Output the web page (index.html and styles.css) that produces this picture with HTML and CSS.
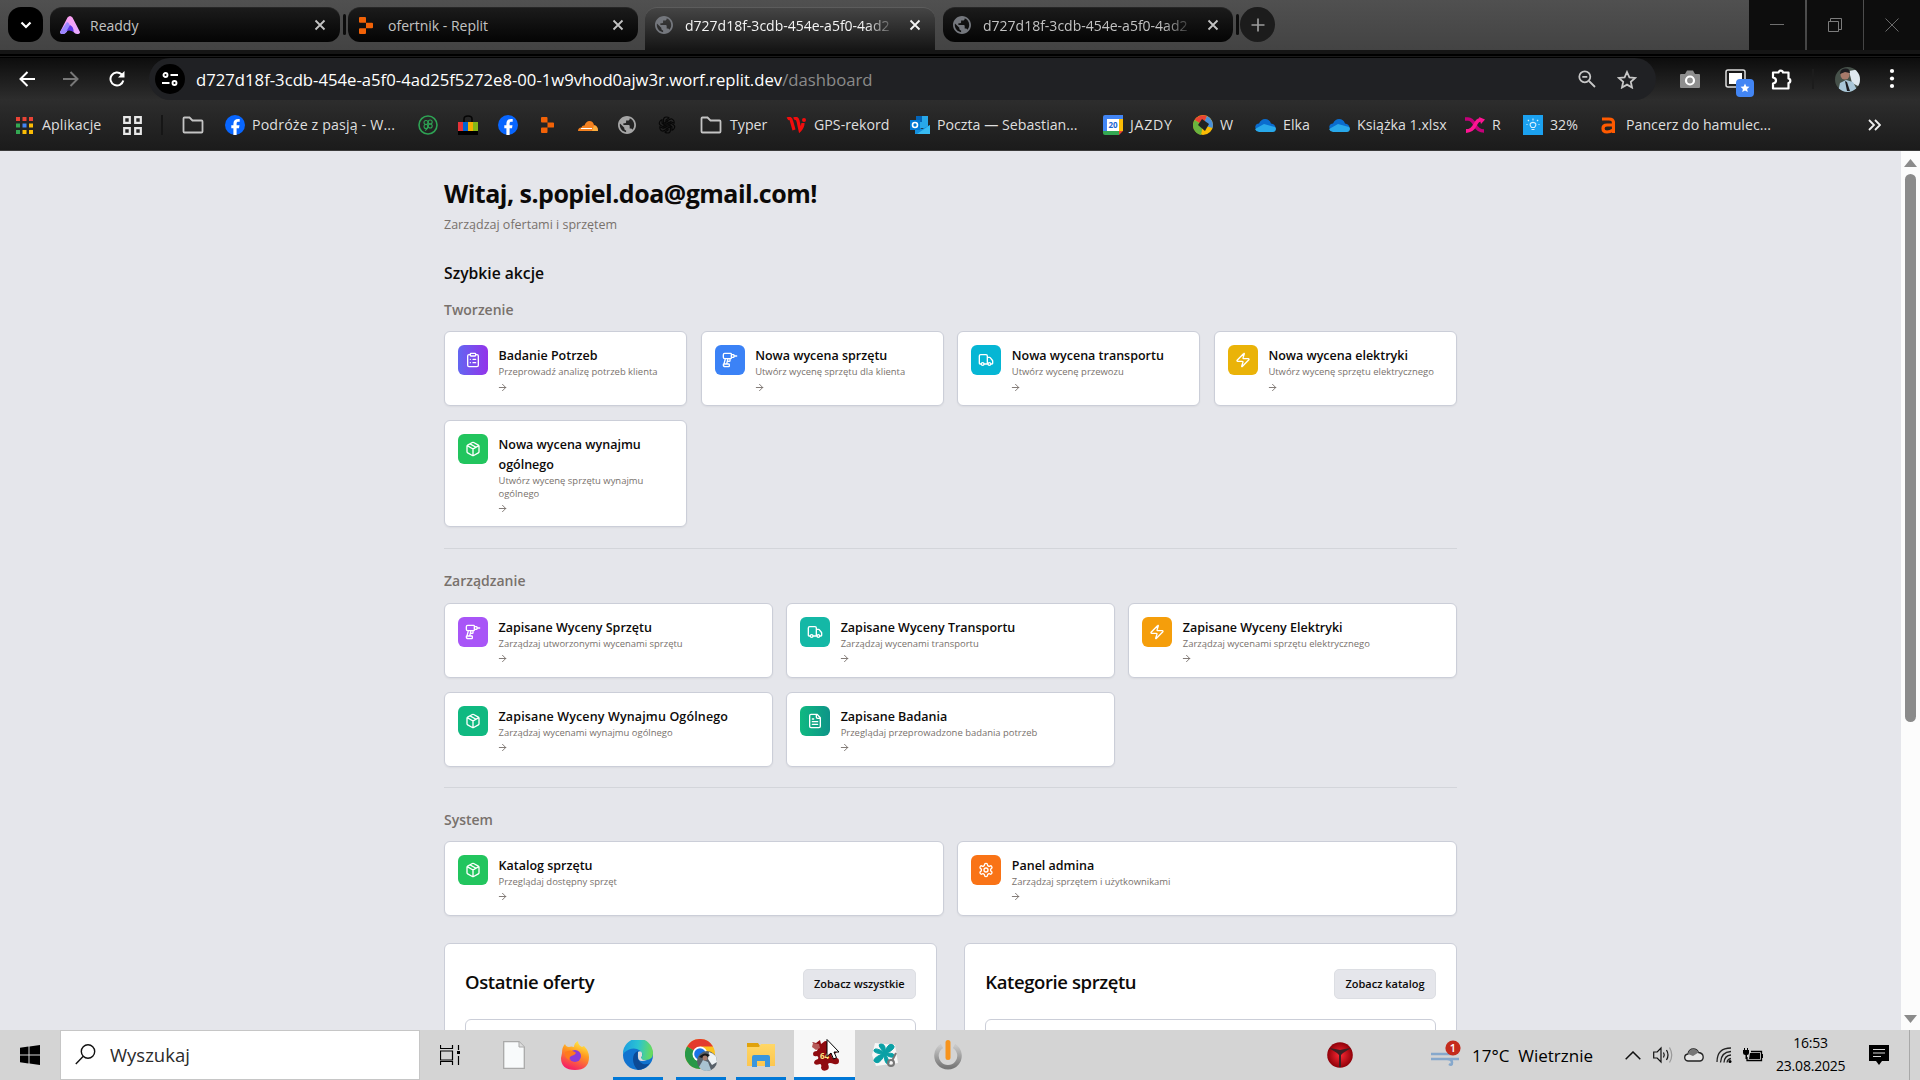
FILE: index.html
```html
<!DOCTYPE html>
<html lang="pl">
<head>
<meta charset="utf-8">
<title>Dashboard</title>
<link rel="stylesheet" href="styles.css">
</head>
<body>
<svg class="defs" aria-hidden="true">
  <defs>
    <linearGradient id="gA" x1="0" y1="0" x2="0.3" y2="1"><stop offset="0" stop-color="#ff9ff0"/><stop offset="1" stop-color="#e9a8ff"/></linearGradient>
    <linearGradient id="gEdge" x1="0" y1="0.3" x2="1" y2="0.4"><stop offset="0" stop-color="#1b9de2"/><stop offset=".5" stop-color="#2bc3d2"/><stop offset="1" stop-color="#6bdc58"/></linearGradient>
    <linearGradient id="gFox" x1="0.7" y1="0" x2="0.3" y2="1"><stop offset="0" stop-color="#fff14a"/><stop offset=".4" stop-color="#ff9a1f"/><stop offset="1" stop-color="#f5166a"/></linearGradient>
    <linearGradient id="gGrey" x1="0" y1="0" x2="0" y2="1"><stop offset="0" stop-color="#c8c8c8"/><stop offset="1" stop-color="#777"/></linearGradient>
    <linearGradient id="gFolder" x1="0" y1="0" x2="0" y2="1"><stop offset="0" stop-color="#ffd766"/><stop offset="1" stop-color="#fcc64f"/></linearGradient>
    <radialGradient id="gRed"><stop offset="0" stop-color="#ff2a35"/><stop offset="1" stop-color="#8f0009"/></radialGradient>
  </defs>
  <symbol id="clipboard" viewBox="0 0 24 24"><rect width="8" height="4" x="8" y="2" rx="1"/><path d="M16 4h2a2 2 0 0 1 2 2v14a2 2 0 0 1-2 2H6a2 2 0 0 1-2-2V6a2 2 0 0 1 2-2h2M12 11h4M12 16h4M8 11h.01M8 16h.01"/></symbol>
  <symbol id="drill" viewBox="0 0 24 24"><path d="M14 9c0 .6-.4 1-1 1H4c-1.1 0-2-.9-2-2V4c0-1.1.9-2 2-2h9c.6 0 1 .4 1 1ZM18 6h4M14 4h3a1 1 0 0 1 1 1v2a1 1 0 0 1-1 1h-3M5 10l-2 8M12 10v3c0 .6-.4 1-1 1H8M7 18l2-8M5 22c-1.7 0-3-1.3-3-3 0-.6.4-1 1-1h7c.6 0 1 .4 1 1v2c0 .6-.4 1-1 1Z"/></symbol>
  <symbol id="truck" viewBox="0 0 24 24"><path d="M14 18V6a2 2 0 0 0-2-2H4a2 2 0 0 0-2 2v11a1 1 0 0 0 1 1h2M15 18H9M19 18h2a1 1 0 0 0 1-1v-3.650a1 1 0 0 0-.22-.624l-3.480-4.350A1 1 0 0 0 17.520 8H14"/><circle cx="17" cy="18" r="2"/><circle cx="7" cy="18" r="2"/></symbol>
  <symbol id="zap" viewBox="0 0 24 24"><path d="M4 14a1 1 0 0 1-.78-1.630l9.900-10.200a.5.5 0 0 1 .86.460l-1.920 6.020A1 1 0 0 0 13 10h7a1 1 0 0 1 .78 1.630l-9.900 10.200a.5.5 0 0 1-.86-.460l1.920-6.020A1 1 0 0 0 11 14z"/></symbol>
  <symbol id="package" viewBox="0 0 24 24"><path d="m7.500 4.270 9 5.150M21 8a2 2 0 0 0-1-1.730l-7-4a2 2 0 0 0-2 0l-7 4A2 2 0 0 0 3 8v8a2 2 0 0 0 1 1.730l7 4a2 2 0 0 0 2 0l7-4A2 2 0 0 0 21 16ZM3.300 7l8.700 5 8.700-5M12 22V12"/></symbol>
  <symbol id="file" viewBox="0 0 24 24"><path d="M15 2H6a2 2 0 0 0-2 2v16a2 2 0 0 0 2 2h12a2 2 0 0 0 2-2V7ZM14 2v4a2 2 0 0 0 2 2h4M10 9H8M16 13H8M16 17H8"/></symbol>
  <symbol id="settings" viewBox="0 0 24 24"><path d="M12.220 2h-.440a2 2 0 0 0-2 2v.180a2 2 0 0 1-1 1.730l-.430.250a2 2 0 0 1-2 0l-.150-.080a2 2 0 0 0-2.730.730l-.220.380a2 2 0 0 0 .730 2.730l.150.100a2 2 0 0 1 1 1.720v.510a2 2 0 0 1-1 1.740l-.150.090a2 2 0 0 0-.730 2.730l.220.380a2 2 0 0 0 2.730.730l.150-.080a2 2 0 0 1 2 0l.430.250a2 2 0 0 1 1 1.730V20a2 2 0 0 0 2 2h.440a2 2 0 0 0 2-2v-.180a2 2 0 0 1 1-1.730l.430-.250a2 2 0 0 1 2 0l.150.080a2 2 0 0 0 2.730-.730l.220-.390a2 2 0 0 0-.730-2.730l-.150-.080a2 2 0 0 1-1-1.740v-.500a2 2 0 0 1 1-1.740l.150-.090a2 2 0 0 0 .730-2.730l-.220-.380a2 2 0 0 0-2.730-.730l-.150.080a2 2 0 0 1-2 0l-.430-.250a2 2 0 0 1-1-1.730V4a2 2 0 0 0-2-2z"/><circle cx="12" cy="12" r="3"/></symbol>
  <symbol id="arrow" viewBox="0 0 24 24"><path d="M5 12h14M12 5l7 7-7 7"/></symbol>
  <symbol id="folder" viewBox="0 0 22 20"><path d="M1.500 16.500V3.500q0-1 1-1h5l3 3h9q1 0 1 1v10q0 1-1 1h-17q-1 0-1-1z" fill="none" stroke="#c4c4c4" stroke-width="1.800"/></symbol>
  <symbol id="globe" viewBox="2 2 20 20"><path fill="currentColor" d="M12 2C6.480 2 2 6.480 2 12s4.480 10 10 10 10-4.480 10-10S17.520 2 12 2zm-1 17.930c-3.950-.49-7-3.850-7-7.930 0-.62.080-1.210.210-1.790L9 15v1c0 1.100.9 2 2 2v1.930zm6.900-2.540c-.26-.81-1-1.390-1.900-1.390h-1v-3c0-.55-.45-1-1-1H8v-2h2c.55 0 1-.45 1-1V7h2c1.100 0 2-.9 2-2v-.41c2.930 1.190 5 4.060 5 7.410 0 2.080-.8 3.970-2.100 5.390z"/></symbol>
  <symbol id="fb" viewBox="0 0 20 20"><circle cx="10" cy="10" r="10" fill="#0866ff"/><path d="M8.400 20v-6.700H6.300v-3h2.100V9c0-3.500 1.600-5.100 5-5.100l1.300.1v2.800h-1.100c-1.500 0-2 .6-2 2v1.500h2.900l-.5 3h-2.400V20z" fill="#fff"/></symbol>
  <symbol id="replit" viewBox="0 0 14 17"><path d="M1 0h5q1 0 1 1v4.700H1q-1 0-1-1V1q0-1 1-1zM7 5.700h6q1 0 1 1v3.600q0 1-1 1H7zM0 12.300q0-1 1-1h6V16q0 1-1 1H1q-1 0-1-1z" fill="#f26207"/></symbol>
  <symbol id="onedrive" viewBox="0 0 21 15"><path d="M3 11Q0 11 .3 8.500 1 5.500 4 5.500 6 1 10 1q4.500 0 6 4.500 4 .5 4.500 4L12 13z" fill="#0a6cce"/><path d="M4 14q-3-.2-4-3l9-5 11 3q1 .500 1 2-.5 3-3 3z" fill="#28a8ea"/></symbol>
  <symbol id="close" viewBox="0 0 12 12"><path d="M1.500 1.500l9 9M10.500 1.500l-9 9" fill="none" stroke="currentColor" stroke-width="1.800"/></symbol>
</svg>

<header class="tabstrip">
  <span class="tab-search"><svg width="12" height="8" viewBox="0 0 12 8"><path d="M1.500 1.500L6 6l4.500-4.500" fill="none" stroke="#fff" stroke-width="2.200"/></svg></span>
  <div class="tab">
    <svg class="fav" width="20" height="18" viewBox="0 0 20 18"><path d="M7.500 1.500Q10-1.500 12.500 1.500L20 16q0 2-3 2-2 0-3.500-2L10 11l-3.500 5Q5 18 3 18q-3 0-3-2z" fill="url(#gA)"/><path d="M7 6L0 16q0 2 3 2 2 0 3.500-2L10 11q0-4-3-5z" fill="#9b86ff"/><path d="M10 9l-3.500 6q3.500-1.500 7 1 .5-5-3.500-7z" fill="#5a35e8"/></svg>
    <span class="tab-title">Readdy</span><svg class="x" width="12" height="12"><use href="#close"/></svg>
  </div>
  <i class="tab-sep"></i>
  <div class="tab">
    <svg class="fav" width="20" height="17"><use href="#replit" x="-2"/></svg>
    <span class="tab-title">ofertnik - Replit</span><svg class="x" width="12" height="12"><use href="#close"/></svg>
  </div>
  <div class="tab active">
    <svg class="fav grey" width="18" height="18"><use href="#globe"/></svg>
    <span class="tab-title fade">d727d18f-3cdb-454e-a5f0-4ad2</span><svg class="x" width="12" height="12"><use href="#close"/></svg>
  </div>
  <div class="tab">
    <svg class="fav grey" width="18" height="18"><use href="#globe"/></svg>
    <span class="tab-title fade">d727d18f-3cdb-454e-a5f0-4ad2</span><svg class="x" width="12" height="12"><use href="#close"/></svg>
  </div>
  <i class="tab-sep"></i>
  <span class="newtab"><svg width="14" height="14" viewBox="0 0 14 14"><path d="M7 0.500v13M.5 7h13" stroke="#9a9a9a" stroke-width="1.700"/></svg></span>
  <div class="winbtns">
    <span><svg width="14" height="14" viewBox="0 0 14 14"><path d="M0 6.500h14" stroke="#6f6f6f"/></svg></span>
    <span><svg width="14" height="14" viewBox="0 0 14 14"><path d="M.5 3.500h10v10H.5zM2.500 3V.500h11v11H11" fill="none" stroke="#7c7c7c"/></svg></span>
    <span><svg width="14" height="14" viewBox="0 0 14 14"><path d="M.5.500l13 13M13.500.500l-13 13" stroke="#6a6a6a"/></svg></span>
  </div>
</header>

<div class="toolbar">
  <svg width="16" height="16" viewBox="0 0 16 16"><path d="M16 8H2M8.500 1L1.500 8l7 7" fill="none" stroke="#fff" stroke-width="2"/></svg>
  <svg width="16" height="16" viewBox="0 0 16 16"><path d="M0 8h14M7.500 1l7 7-7 7" fill="none" stroke="#777" stroke-width="2"/></svg>
  <svg class="reload" width="16" height="16" viewBox="0 0 16 16"><path d="M14.300 9.500A6.500 6.500 0 1 1 12.500 3.300L14 5" fill="none" stroke="#fff" stroke-width="2"/><path d="M15.500 0v6.500H9z" fill="#fff"/></svg>
  <div class="omnibox">
    <span class="site"><svg width="16" height="14" viewBox="0 0 16 14"><g fill="none" stroke="#fff" stroke-width="1.900"><circle cx="3.500" cy="3" r="2"/><path d="M8.500 3H16M0 11h7.500"/><circle cx="12.500" cy="11" r="2"/></g></svg></span>
    <span class="url">d727d18f-3cdb-454e-a5f0-4ad25f5272e8-00-1w9vhod0ajw3r.worf.replit.dev<em>/dashboard</em></span>
    <svg width="18" height="18" viewBox="0 0 18 18"><g fill="none" stroke="#c7c7c7" stroke-width="1.800"><circle cx="6.800" cy="6.800" r="5.500"/><path d="M11 11l6 6M4.300 6.800h5"/></g></svg>
    <svg width="20" height="19" viewBox="0 0 20 19"><path d="M10 2l2.400 5.300 5.700.6-4.300 3.900 1.200 5.700-5-2.900-5 2.900 1.200-5.700L1.900 7.900l5.700-.6z" fill="none" stroke="#c7c7c7" stroke-width="1.800"/></svg>
  </div>
  <div class="exts">
    <svg width="20" height="18" viewBox="0 0 20 18"><path d="M1 4h4l2-3.500h6L15 4h4q1 0 1 1v12q0 1-1 1H1q-1 0-1-1V5q0-1 1-1z" fill="#8e8e8e"/><circle cx="10" cy="10.500" r="4" fill="#8e8e8e" stroke="#fff" stroke-width="2.200"/></svg>
    <svg width="29" height="28" viewBox="0 0 29 28"><rect x="1" y="1" width="19" height="17" rx="2" fill="none" stroke="#ddd" stroke-width="1.500"/><rect x="4" y="4" width="13" height="11" fill="#fff"/><rect x="11" y="10" width="18" height="18" rx="4" fill="#4285f4"/><path d="M20 14.500l1.300 3 3.200.3-2.400 2.100.7 3.200-2.800-1.700-2.800 1.700.7-3.200-2.400-2.100 3.200-.3z" fill="#fff"/></svg>
    <svg width="22" height="21" viewBox="0 0 22 21"><path d="M2 3.500h5.500a2.300 2.300 0 0 1 4.500 0h5.500v6a2.300 2.300 0 0 1 0 4.500v5.500H2v-5q3-.500 3-3t-3-3z" fill="none" stroke="#fff" stroke-width="2.200" stroke-linejoin="round"/></svg>
    <i></i>
    <svg width="25" height="25" viewBox="0 0 25 25"><clipPath id="av"><circle cx="12.500" cy="12.500" r="12.500"/></clipPath><g clip-path="url(#av)"><path fill="#46514a" d="M0 0h25v25H0z"/><path fill="#dfe8ee" d="M14 4l11-2v18l-8-4z"/><path fill="#a9c6d8" d="M3 25l2-9 6-3 7 2 5 10z"/><circle cx="10" cy="8" r="4.500" fill="#a6796a"/><path fill="#1c1c20" d="M5 7q0-5 5-5.500T15 6l-5-1zM10 14l2 1 3 9h-3z"/></g></svg>
    <svg width="6" height="22" viewBox="0 0 6 22"><g fill="#fff"><circle cx="3" cy="3" r="2.100"/><circle cx="3" cy="10.500" r="2.100"/><circle cx="3" cy="18" r="2.100"/></g></svg>
  </div>
</div>

<nav class="bookmarks">
  <a class="wide"><svg width="17" height="17" viewBox="0 0 17 17"><g><path fill="#ea4335" d="M0 0h4v4H0zM6.500 0h4v4h-4zM13 0h4v4h-4z"/><path fill="#34a853" d="M0 6.500h4v4H0zM0 13h4v4H0z"/><path fill="#4285f4" d="M6.500 6.500h4v4h-4z"/><path fill="#fbbc04" d="M13 6.500h4v4h-4zM6.500 13h4v4h-4zM13 13h4v4h-4z"/></g></svg><span>Aplikacje</span></a>
  <a><svg width="19" height="19" viewBox="0 0 19 19"><path d="M1.200 1.200h5.600v5.600H1.200zM12.200 1.200h5.600v5.600h-5.600zM1.200 12.200h5.600v5.600H1.200zM12.200 12.200h5.600v5.600h-5.600z" fill="none" stroke="#e8e8e8" stroke-width="2.200"/></svg></a>
  <i></i>
  <a><svg width="22" height="20"><use href="#folder"/></svg></a>
  <a><svg width="20" height="20"><use href="#fb"/></svg><span class="trips">Podróże z pasją - W...</span></a>
  <a><svg width="20" height="20" viewBox="0 0 20 20"><g fill="none" stroke="#2ea354"><circle cx="10" cy="10" r="9" stroke-width="1.600"/><g stroke-width="1.100"><circle cx="8" cy="7.500" r="2"/><circle cx="12.200" cy="7" r="2"/><circle cx="8" cy="11.500" r="2"/><circle cx="12.200" cy="11" r="2"/><path d="M10 10q0 4-3 5.500"/></g></g></svg></a>
  <a><svg width="20" height="20" viewBox="0 0 20 20"><path d="M6 8V4q0-3 4-3t4 3v4" fill="none" stroke="#050505" stroke-width="1.500"/><path fill="#e53238" d="M0 7h5v9H0z"/><path fill="#0064d2" d="M5 7h5v9H5z"/><path fill="#f5af02" d="M10 7h5v9h-5z"/><path fill="#86b817" d="M15 7h5v9h-5z"/><path d="M0 16h20v4H0z"/></svg></a>
  <a><svg width="20" height="20"><use href="#fb"/></svg></a>
  <a><svg width="13" height="16"><use href="#replit"/></svg></a>
  <a><svg width="20" height="11" viewBox="0 0 20 11"><path d="M0 11q0-3.500 3.500-3.500Q4 5 6.500 5.500 8 1 11.500 1 15 1 16 5q4 .5 4 6z" fill="#f48120"/><path d="M14 11l2-5.500q4 .5 4 5.500z" fill="#faad3f"/><path d="M3 8.500h11" stroke="#fff" stroke-width="1"/></svg></a>
  <a class="globe2"><svg width="18" height="18"><use href="#globe"/></svg></a>
  <a><svg width="18" height="18" viewBox="0 0 18 18"><g fill="none" stroke="#080808" stroke-width="1.200"><path id="pt" d="M9 5.500L5.500 7.500V4q0-3 3-3 1.500 0 2.500 1l-3 2v5"/><use href="#pt" transform="rotate(60 9 9)"/><use href="#pt" transform="rotate(120 9 9)"/><use href="#pt" transform="rotate(180 9 9)"/><use href="#pt" transform="rotate(240 9 9)"/><use href="#pt" transform="rotate(300 9 9)"/></g></svg></a>
  <a class="wide"><svg width="22" height="20"><use href="#folder"/></svg><span>Typer</span></a>
  <a class="wide"><svg width="20" height="16" viewBox="0 0 20 16"><path d="M1.500 2q3-2 4 2l2.500 9M8 2q3-2 4 2l2 9q3-3 3-7" fill="none" stroke="#f20d0d" stroke-width="3.200"/><circle cx="18" cy="3" r="2" fill="#f20d0d"/></svg><span>GPS-rekord</span></a>
  <a><svg width="20" height="20" viewBox="0 0 20 20"><path d="M6 1h12v12H6z" fill="#28a8ea"/><path d="M6 1h6v6H6z" fill="#0364b8"/><path d="M5 10l7 4 8-4v9H5z" fill="#1490df"/><path d="M20 10v9H7z" fill="#50d9ff" opacity=".6"/><path d="M0 5h10v10H0z" fill="#0078d4"/><circle cx="5" cy="10" r="2.500" fill="none" stroke="#fff" stroke-width="1.600"/></svg><span>Poczta — Sebastian...</span></a>
  <a><svg width="20" height="20" viewBox="0 0 20 20"><path d="M2 0h18v4H0V2q0-2 2-2z" fill="#4285f4"/><path d="M0 4h4v12H0z" fill="#4285f4"/><path d="M16 4h4v12h-4z" fill="#fbbc04"/><path d="M0 16h16v4H2q-2 0-2-2z" fill="#34a853"/><path d="M16 20l4-4h-4z" fill="#ea4335"/><path d="M4 4h12v12H4z" fill="#fff"/><text x="10" y="13.300" class="cal">20</text></svg><span class="jazdy">JAZDY</span></a>
  <a><svg width="20" height="20" viewBox="0 0 20 20"><circle cx="10" cy="10" r="10" fill="#fbbc04"/><path d="M10 10L1.500 5A10 10 0 0 1 14 1z" fill="#ea4335"/><path d="M10 10l4-9a10 10 0 0 1 5.500 12z" fill="#4a90d9"/><path d="M10 10L8 20A10 10 0 0 1 1.500 5z" fill="#6ab43e"/><path d="M9 4l7 5-4 7-7-6z" fill="#222"/></svg><span>W</span></a>
  <a><svg width="21" height="15"><use href="#onedrive"/></svg><span>Elka</span></a>
  <a><svg width="21" height="15"><use href="#onedrive"/></svg><span>Książka 1.xlsx</span></a>
  <a><svg width="20" height="16" viewBox="0 0 20 16"><path d="M0 2h3q4 0 7 6t9 6" fill="none" stroke="#c4007a" stroke-width="3.500"/><path d="M1 14q6 0 9-6t6-5" fill="none" stroke="#ff1493" stroke-width="3.800"/><path d="M14 0l6 2.500-4 4.500z" fill="#ff1493"/></svg><span>R</span></a>
  <a><svg width="20" height="20" viewBox="0 0 20 20"><path d="M0 0h20v20H0z" fill="#1ba1f0"/><path d="M8.500 12.500Q6 9.500 8 8q2-1.200 4 0 2 1.500-.5 4.500zM8.500 14.500h3M10 5.500v-2M6 6L4.800 4.800M14 6l1.200-1.200M4.500 9.500h-1M16.500 9.500h-1" fill="none" stroke="#d8f0ff" stroke-width="1.100"/></svg><span>32%</span></a>
  <a class="last"><svg width="14" height="17" viewBox="0 0 14 17"><path d="M1 2h7q4.500 0 4.500 4v10M12 8H6Q2 8 2 11.500T6 15q3 0 6-2" fill="none" stroke="#ff5a00" stroke-width="3.200"/></svg><span>Pancerz do hamulec...</span></a>
  <a><svg width="13" height="12" viewBox="0 0 13 12"><path d="M1 1l5 5-5 5M7 1l5 5-5 5" fill="none" stroke="#eee" stroke-width="1.800"/></svg></a>
</nav>

<div class="viewport">
  <main>
    <h1>Witaj, s.popiel.doa@gmail.com!</h1>
    <p class="lead">Zarządzaj ofertami i sprzętem</p>
    <h2>Szybkie akcje</h2>

    <section class="group first">
      <h3>Tworzenie</h3>
      <div class="cards four">
        <article class="card"><span class="ic violet"><svg><use href="#clipboard"/></svg></span><div><h4>Badanie Potrzeb</h4><p>Przeprowadź analizę potrzeb klienta</p><svg class="go"><use href="#arrow"/></svg></div></article>
        <article class="card"><span class="ic blue"><svg><use href="#drill"/></svg></span><div><h4>Nowa wycena sprzętu</h4><p>Utwórz wycenę sprzętu dla klienta</p><svg class="go"><use href="#arrow"/></svg></div></article>
        <article class="card"><span class="ic cyan"><svg><use href="#truck"/></svg></span><div><h4>Nowa wycena transportu</h4><p>Utwórz wycenę przewozu</p><svg class="go"><use href="#arrow"/></svg></div></article>
        <article class="card"><span class="ic yellow"><svg><use href="#zap"/></svg></span><div><h4>Nowa wycena elektryki</h4><p>Utwórz wycenę sprzętu elektrycznego</p><svg class="go"><use href="#arrow"/></svg></div></article>
        <article class="card"><span class="ic green"><svg><use href="#package"/></svg></span><div><h4>Nowa wycena wynajmu<br>ogólnego</h4><p>Utwórz wycenę sprzętu wynajmu<br>ogólnego</p><svg class="go"><use href="#arrow"/></svg></div></article>
      </div>
    </section>

    <section class="group">
      <h3>Zarządzanie</h3>
      <div class="cards three">
        <article class="card"><span class="ic purple"><svg><use href="#drill"/></svg></span><div><h4>Zapisane Wyceny Sprzętu</h4><p>Zarządzaj utworzonymi wycenami sprzętu</p><svg class="go"><use href="#arrow"/></svg></div></article>
        <article class="card"><span class="ic teal"><svg><use href="#truck"/></svg></span><div><h4>Zapisane Wyceny Transportu</h4><p>Zarządzaj wycenami transportu</p><svg class="go"><use href="#arrow"/></svg></div></article>
        <article class="card"><span class="ic amber"><svg><use href="#zap"/></svg></span><div><h4>Zapisane Wyceny Elektryki</h4><p>Zarządzaj wycenami sprzętu elektrycznego</p><svg class="go"><use href="#arrow"/></svg></div></article>
        <article class="card"><span class="ic emerald"><svg><use href="#package"/></svg></span><div><h4 class="long">Zapisane Wyceny Wynajmu Ogólnego</h4><p>Zarządzaj wycenami wynajmu ogólnego</p><svg class="go"><use href="#arrow"/></svg></div></article>
        <article class="card"><span class="ic sea"><svg><use href="#file"/></svg></span><div><h4>Zapisane Badania</h4><p>Przeglądaj przeprowadzone badania potrzeb</p><svg class="go"><use href="#arrow"/></svg></div></article>
      </div>
    </section>

    <section class="group">
      <h3>System</h3>
      <div class="cards two">
        <article class="card"><span class="ic green"><svg><use href="#package"/></svg></span><div><h4>Katalog sprzętu</h4><p>Przeglądaj dostępny sprzęt</p><svg class="go"><use href="#arrow"/></svg></div></article>
        <article class="card"><span class="ic orange"><svg><use href="#settings"/></svg></span><div><h4>Panel admina</h4><p>Zarządzaj sprzętem i użytkownikami</p><svg class="go"><use href="#arrow"/></svg></div></article>
      </div>
    </section>

    <div class="panels">
      <section class="panel"><header><h2>Ostatnie oferty</h2><button>Zobacz wszystkie</button></header><div class="box"></div></section>
      <section class="panel"><header><h2>Kategorie sprzętu</h2><button class="b2">Zobacz katalog</button></header><div class="box"></div></section>
    </div>
  </main>
  <aside class="scrollbar">
    <svg width="13" height="8" viewBox="0 0 13 8"><path d="M0 8L6.500 0 13 8z" fill="#8b8b8b"/></svg>
    <i></i>
    <svg width="13" height="8" viewBox="0 0 13 8"><path d="M0 0l6.500 8L13 0z" fill="#8b8b8b"/></svg>
  </aside>
</div>

<footer class="taskbar">
  <div class="start"><svg width="20" height="20" viewBox="0 0 20 20"><path d="M0 2.800L8.500 1.500v8H0zM9.500 1.400L20 0v9.500H9.500zM0 10.500h8.500v8L0 17.300zM9.500 10.500H20V20L9.500 18.600z"/></svg></div>
  <div class="search"><svg width="21" height="21" viewBox="0 0 21 21"><g fill="none" stroke="#111" stroke-width="1.400"><circle cx="13" cy="7.500" r="6.700"/><path d="M8.300 12.300L.8 20"/></g></svg><span>Wyszukaj</span></div>
  <div class="app view"><svg width="20" height="20" viewBox="0 0 20 20"><path d="M.5 0v3.500h12V0M.5 6h12v9H.5zM.5 20v-3.500h12V20M18.500 0v5M18.500 11v9" fill="none" stroke="#000" stroke-width="1.200"/><path d="M17 6h3v3h-3z"/></svg></div>
  <div class="app"><svg width="22" height="28" viewBox="0 0 22 28"><path d="M.7.700H16L21.300 6v21.300H.7z" fill="#f8fafb" stroke="#a9a9a9" stroke-width="1.300"/><path d="M16 .7V6h5.300" fill="#ddd" stroke="#a9a9a9"/></svg></div>
  <div class="app"><svg width="28" height="29" viewBox="0 0 28 29"><path d="M1 12Q1 6 4 3q1 3 4 3 2-1 5 0 0-4 4-6 0 4 4 6l2-1q5 5 5 11 0 13-14 13T0 17z" fill="url(#gFox)"/><circle cx="14" cy="15" r="6" fill="#8a3bd8"/><path d="M4 11q5-3 10 0 2 1-1 3-5 1-5 5-5-3-4-8z" fill="#ff7a1c"/></svg></div>
  <div class="app run"><svg width="30" height="30" viewBox="0 0 30 30"><circle cx="15" cy="15" r="15" fill="#1173cf"/><path d="M0 14A15 15 0 0 1 30 13q0 7-7 7-5 0-5-2 3-4-1-7.500Q12 7 6 9.500 1 12 0 14z" fill="url(#gEdge)"/><path d="M10 19q0-6 5-8-2 10 5 13 4 1 7-1-5 7-12 7-5-4-5-11z" fill="#0c4a96"/><path d="M15 12q3-2 4 1 .500 3-1 4.500.500 3 6 2.500-9 3-9-3z" fill="#dcdcdc"/></svg></div>
  <div class="app run chrome"><svg width="32" height="32" viewBox="0 0 32 32"><circle cx="15" cy="15" r="15" fill="#fcc31e"/><path d="M15 15L2 7.500A15 15 0 0 1 28 7.500H15z" fill="#e33b2e"/><path d="M15 15l0 15A15 15 0 0 1 2 7.500z" fill="#279847"/><circle cx="15" cy="15" r="7.500" fill="#fff"/><circle cx="15" cy="15" r="5.800" fill="#1a73e8"/><circle cx="22" cy="22" r="10" fill="#58616a"/><path d="M24 13q8 2 8 10l-5 3-4-6z" fill="#eef3f6"/><path d="M14 28l4-7 5 2 3 8q-7 3-12-3z" fill="#a9c3d2"/><path d="M14 18q5-6 11-2l-5 4z" fill="#16181b"/><circle cx="20" cy="19" r="2.500" fill="#a47a6c"/></svg></div>
  <div class="app run"><svg width="28" height="24" viewBox="0 0 28 24"><path d="M0 0h11l2 3v3H0z" fill="#e0a20c"/><path d="M0 4h12l2-3h14v22H0z" fill="url(#gFolder)"/><path d="M5 24V14q0-2 2-2h14q2 0 2 2v10h-5v-6h-8v6z" fill="#3a96dd"/></svg></div>
  <div class="app run current"><svg width="32" height="32" viewBox="0 0 32 32"><path d="M3 3l4 1 4-3 1 4 4-3q4 0 4 4l-2 4q2 2 5 0 5-1 5 2 0 3-5 3-1 3 1 4 6-1 6 3 0 4-5 3-5-2-6 0 2 5-1 6-5 2-6-2 1-4-1-4-5 2-6-1 0-3 4-4 1-2-1-3-4 1-4-2 0-3 4-3l1-3z" fill="#8f0b10"/><path d="M4 4l6 1 1 4-4 2-4-3z" fill="#b75a58"/><text x="11" y="20" class="n64">64</text><path d="M18 .5v17l4-3.500 2.500 6 3-1.300-2.500-5.700h5z" fill="#fff" stroke="#000" stroke-width="1"/></svg></div>
  <div class="app"><svg width="28" height="28" viewBox="0 0 28 28"><path d="M3 2l20 2 3 18-22 3L0 14z" fill="#f7f7f7"/><path d="M12 11Q4 3 9 3t4 7q4-9 8-6t-6 8q8 0 7 3t-8-1q5 9 2 9t-4-8q-5 9-9 6t7-8Q1 12 2 9t10 2z" fill="#0aa0a5" stroke="#0aa0a5" stroke-width="1"/><circle cx="19" cy="22" r="3" fill="none" stroke="#777" stroke-width="2"/><path d="M20 20l4-8" stroke="#777" stroke-width="2"/></svg></div>
  <div class="app"><svg width="28" height="30" viewBox="0 0 28 30"><path d="M8 6a11.500 11.500 0 1 0 12 0" fill="none" stroke="url(#gGrey)" stroke-width="4.500"/><rect x="11.500" y="0" width="5" height="20" rx="2.500" fill="#f7941d"/></svg></div>
  <div class="red"><svg width="26" height="26" viewBox="0 0 26 26"><circle cx="13" cy="13" r="12.800" fill="url(#gRed)"/><path d="M2 6q7 1 11 2 4-1 11-2l-8 5-2 2v12h-2V13l-2-2z" fill="#3c2024"/></svg></div>
  <div class="weather"><svg width="30" height="30" viewBox="0 0 30 30"><g fill="none" stroke="#86a8cc" stroke-width="2.600"><path d="M0 14h21q4 0 4-4M0 19h28M7 19h9q5 0 5 3.500T18 24"/></g><circle cx="22" cy="8" r="7.600" fill="#c42b1c"/><text x="22" y="12" class="badge">1</text></svg><span>17°C&nbsp; Wietrznie</span></div>
  <div class="tray">
    <svg width="16" height="9" viewBox="0 0 16 9"><path d="M.7 8.300L8 1l7.300 7.300" fill="none" stroke="#111" stroke-width="1.500"/></svg>
    <svg width="20" height="18" viewBox="0 0 20 18"><path d="M.7 6h3.500L8 2v14l-3.800-4H.7zM10.500 6.500q1.500 2.500 0 5M13.500 4q3 5 0 10" fill="none" stroke="#111" stroke-width="1.200"/><path d="M16.500 1.500q4.500 7.500 0 15" fill="none" stroke="#999" stroke-width="1.200"/></svg>
    <svg width="20" height="14" viewBox="0 0 20 14"><path d="M4 13q-3.300-.5-3.300-3.500T4 6Q5 1 9.500 1 13 1 14.500 4.500 19 5 19.200 9q0 3.500-3.200 4z" fill="#e6e6e6" stroke="#222" stroke-width="1.300"/><path d="M4 6q1-5 5.500-5 3.500 0 5 3.500L9 8z" fill="#777"/></svg>
    <svg width="16" height="16" viewBox="0 0 16 16"><g fill="none" stroke="#222" stroke-width="1.300"><path d="M1 15Q1 1 15 1M4.500 15.500Q5 5 15 4.500M8 15.500Q8.500 8.500 15 8M11 15.500q.5-3.500 4-4"/></g><circle cx="14" cy="14.500" r="1.500"/></svg>
    <svg width="20" height="14" viewBox="0 0 20 14"><path d="M8 3.500h10.500v9H4V9" fill="none" stroke="#000" stroke-width="1.300"/><path d="M7 5h10v6H6zM19 6h1v4h-1zM0 2h6v3q0 2-2 2v4H2.500V7Q0 7 0 5z"/><path d="M1.500 0v2M4.500 0v2" stroke="#000"/></svg>
  </div>
  <div class="clock">16:53<br>23.08.2025</div>
  <div class="note"><svg width="20" height="20" viewBox="0 0 20 20"><path d="M0 0h20v16h-7l-3 4-3-4H0z"/><path d="M4 4.500h12M4 8h12M4 11.500h8" stroke="#d5d5d5" stroke-width="1.200"/></svg></div>
</footer>
</body>
</html>
```
FILE: styles.css
```css
* { box-sizing: border-box; }
body {
  margin: 0; width: 1920px; height: 1080px; overflow: hidden;
  display: grid; grid-template-rows: 50px 50px 51px 879px 50px;
  font-family: "Open Sans", "Noto Sans", sans-serif;
  background: #1d1d1d;
}
h1, h2, h3, h4, p { margin: 0; }
svg { display: block; flex: none; }
.defs { position: absolute; width: 0; height: 0; }

/* tab strip */
.tabstrip {
  display: flex; align-items: flex-start; padding: 7px 0 0 8px; height: 50px;
  background: linear-gradient(#505050, #434343);
}
.tab-search, .newtab { width: 35px; height: 35px; border-radius: 13px; background: #000; display: grid; place-items: center; }
.tab-search { margin-right: 7px; }
.tab {
  width: 290px; height: 35px; border-radius: 12px; display: flex; align-items: center;
  padding: 0 14px 0 10px; background: linear-gradient(#1b1b1b, #040404);
  color: #c3c3c3; border-top: 1px solid #262626;
}
.tab .fav { width: 20px; margin-right: 10px; }
.tab-title { flex: 1; font-size: 14px; line-height: 20px; padding-top: 1px; white-space: nowrap; }
.fade { -webkit-mask-image: linear-gradient(90deg, #000 180px, transparent 212px); mask-image: linear-gradient(90deg, #000 180px, transparent 212px); }
.tab .grey { color: #74777d; width: 18px; margin-right: 12px; }
.tab-sep { width: 3px; height: 21px; margin: 7px 2px 0 3px; background: #0c0c0c; border-radius: 2px; }
.tab.active {
  margin: 0 8px 0 7px; height: 43px; border-radius: 12px 12px 0 0; padding-bottom: 8px;
  background: linear-gradient(#454545, #151515); color: #f4f4f4; border-color: #5c5c5c;
}
.newtab { background: #1c1c1c; border-radius: 50%; margin-left: -1px; }
.winbtns { margin: -7px 0 0 auto; display: flex; gap: 1.500px; }
.winbtns span { width: 56px; height: 50px; background: #0d0d0d; display: grid; place-items: center; }

/* toolbar */
.toolbar {
  display: flex; align-items: center; padding: 8px 0 0 19px; gap: 28px;
  background: linear-gradient(#151515 0 4px, #000 4px 6px, #1a1a1a 6px 7px, #000 7px 8px, #0d0d0d 8px, #2d2d2d);
}
.reload { margin: 0 -1px 0 2px; }
.omnibox {
  margin-left: -3px; width: 1507px; height: 42px; border-radius: 21px; background: #202124;
  display: flex; align-items: center; padding: 0 19px 0 6px;
}
.site { width: 30px; height: 30px; border-radius: 50%; background: #000; display: grid; place-items: center; margin-right: 11px; }
.url { flex: 1; font-size: 16.700px; line-height: 24px; padding-top: 1px; color: #fff; white-space: nowrap; }
.url em { font-style: normal; color: #8b8b8b; }
.omnibox > svg + svg { margin-left: 21px; }
.exts { display: grid; grid-template-columns: 45px 46px 41px 23px 54px 6px; align-items: center; margin-left: -4px; }
.exts svg:nth-child(2) { margin-top: 8px; }
.exts i { width: 2px; height: 20px; background: #1c1c1c; }

/* bookmarks bar */
.bookmarks {
  display: grid; align-items: center; padding: 0 0 0 16px; border-bottom: 1px solid #3a3a3a;
  grid-template-columns: 107px 38px 21px 43px 193px 40px 40px 43px 37px 40px 40px 42px 86px 124px 193px 90px 62px 74px 136px 58px 78px 267px 20px;
  background: linear-gradient(#2d2d2d, #1b1b1b);
}
.bookmarks a { display: flex; align-items: center; gap: 7px; color: #dfdfdf; font-size: 14.200px; line-height: 20px; white-space: nowrap; }
.bookmarks a.wide { gap: 8px; }
.bookmarks a:first-child { gap: 9px; letter-spacing: 0.1px; }
.bookmarks a.last { gap: 11px; }
.bookmarks .jazdy { letter-spacing: 0.7px; }
.bookmarks .trips { letter-spacing: 0.15px; }
.bookmarks > i { width: 2px; height: 20px; background: #161616; }
.bookmarks a.globe2 { color: #a5a5a5; }
.cal { font: bold 8px "Open Sans", sans-serif; fill: #1967d2; text-anchor: middle; }

/* page */
.viewport { display: flex; justify-content: space-between; background: #e5e6eb; overflow: hidden; }
main { width: 1013px; margin-left: 444px; padding-top: 25px; color: #0c0a09; }
h1 { font-size: 25px; line-height: 34px; font-weight: 700; letter-spacing: -0.5px; }
.lead { font-size: 12.500px; line-height: 18px; margin-top: 6px; color: #78716c; }
main > h2 { font-size: 15.700px; line-height: 24px; margin-top: 27px; font-weight: 600; }
h3 { font-size: 14px; line-height: 20px; font-weight: 600; color: #78716c; }
.group { padding-top: 22px; margin-top: 20.300px; border-top: 1px solid #d3d5da; }
.group.first { padding-top: 1px; margin-top: 14px; border: 0; }
.cards { display: grid; gap: 13.500px; margin-top: 12px; }
.cards.four { margin-top: 11px; grid-template-columns: repeat(4, 1fr); }
.cards.three { grid-template-columns: repeat(3, 1fr); }
.cards.two { margin-top: 10.500px; grid-template-columns: repeat(2, 1fr); }
.card {
  background: #fff; border: 1px solid #cbced8; border-radius: 6px; padding: 13px;
  display: flex; gap: 10.500px; box-shadow: 0 1px 2px rgba(0,0,0,.05); min-height: 75.400px;
}
.ic { width: 30px; height: 30px; border-radius: 6px; display: grid; place-items: center; flex: none; }
.ic svg { width: 16px; height: 16px; }
.ic svg, .go { fill: none; stroke: #fff; stroke-width: 2; stroke-linecap: round; stroke-linejoin: round; }
.card h4 { font-size: 12.500px; line-height: 20px; padding-top: 1px; margin-bottom: -1px; font-weight: 600; white-space: nowrap; }
.card h4.long { letter-spacing: 0.14px; }
.card p { font-size: 9.450px; line-height: 13px; color: #78716c; white-space: nowrap; }
.card .go { width: 11px; height: 11px; stroke: #78716c; margin: 3.500px 0 -1px -1.500px; }
.violet { background: linear-gradient(90deg, #6366f1, #9333ea); }
.blue { background: #3b82f6; } .cyan { background: #06b6d4; } .yellow { background: #eab308; }
.green { background: #22c55e; } .purple { background: #a855f7; } .teal { background: #14b8a6; }
.amber { background: #f59e0b; } .emerald { background: #10b981; } .orange { background: #f97316; }
.sea { background: linear-gradient(90deg, #10b981, #0d9488); }
.panels { display: grid; grid-template-columns: 1fr 1fr; gap: 27.500px; margin-top: 26.500px; }
.panel { background: #fff; border: 1px solid #cbced8; border-radius: 6px; padding: 25px 20px; height: 160px; }
.panel header { display: flex; justify-content: space-between; height: 30px; align-items: center; }
.panel h2 { font-size: 18.500px; line-height: 26px; font-weight: 600; letter-spacing: -0.4px; margin-top: -3px; }
.panel button { width: 113px; height: 30px; padding: 0; border: 1px solid #dcdee3; border-radius: 5px; background: #e5e6eb; font: 600 11px/16px "Open Sans", sans-serif; color: #0c0a09; }
.panel button.b2 { width: 102px; }
.box { height: 90px; margin-top: 20px; border: 1px solid #cbced8; border-radius: 6px; }
.scrollbar { width: 19px; background: #fcfcfc; display: flex; flex-direction: column; align-items: center; padding: 8px 0 7px; }
.scrollbar i { width: 11px; height: 548px; border-radius: 6px; background: #8b8b8b; margin: 7px 0 auto; }

/* taskbar */
.taskbar {
  display: grid; align-items: stretch; background: #d4d4d4; color: #000;
  grid-template-columns: 60px 360px 60px 68px 54px 72px 54px 66px 61px 62px 62px 452px 194px 151px 69px 70px;
}
.start, .app, .red { display: grid; place-items: center; }
.search { background: #fff; border: 1px solid #c6c6c6; display: flex; align-items: center; padding: 0 0 2px 14px; gap: 14px; color: #2b2b2b; font-size: 18.500px; }
.app { position: relative; }
.run::after { content: ""; position: absolute; left: 50%; bottom: 0; width: 50px; height: 3px; margin-left: -25px; background: #0078d7; }
.current { background: #f7f7f7; }
.current::after { left: 0; width: 100%; margin: 0; }
.n64 { font: bold 8px "Open Sans", sans-serif; fill: #ffe680; }
.red { justify-items: end; padding-right: 78px; }
.weather { display: flex; align-items: center; gap: 11px; font-size: 17px; white-space: nowrap; }
.badge { font: 600 11px "Open Sans", sans-serif; fill: #fff; text-anchor: middle; }
.tray { display: flex; align-items: center; gap: 11.500px; }
.clock { text-align: center; font-size: 14px; line-height: 22.500px; padding-top: 2px; letter-spacing: -0.2px; white-space: nowrap; }
.note { display: grid; align-items: center; padding-left: 24px; margin-right: 5px; border-right: 1px solid #a8a8a8; }
```
